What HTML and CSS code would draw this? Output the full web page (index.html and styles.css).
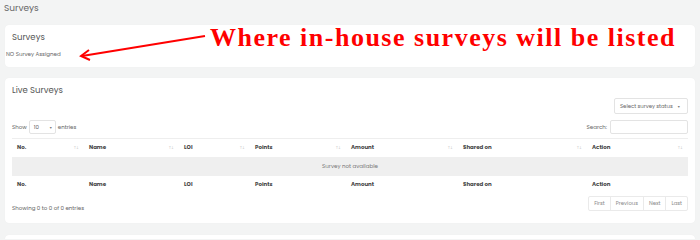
FILE: index.html
```html
<!DOCTYPE html>
<html>
<head>
<meta charset="utf-8">
<link rel="stylesheet" href="styles.css">
</head>
<body>
<div class="page">
  <div class="page-title">Surveys</div>
  <div class="card card-top">
    <div class="card-title">Surveys</div>
    <div class="empty-note">NO Survey Assigned</div>
  </div>
  <div class="card card-live">
    <div class="card-title">Live Surveys</div>
    <div class="filter-row">
      <div class="status-select">Select survey status <span class="caret">&#9662;</span></div>
    </div>
    <div class="controls">
      <div class="length">Show <span class="len-select">10 <span class="caret">&#9662;</span></span> entries</div>
      <div class="search">Search: <span class="search-input"></span></div>
    </div>
    <table class="grid">
      <colgroup>
        <col style="width:72px"><col style="width:95px"><col style="width:71px"><col style="width:96px"><col style="width:112px"><col style="width:129px"><col style="width:101px">
      </colgroup>
      <thead>
        <tr>
          <th>No.<span class="sort">&#8593;&#8595;</span></th>
          <th>Name<span class="sort">&#8593;&#8595;</span></th>
          <th>LOI<span class="sort">&#8593;&#8595;</span></th>
          <th>Points<span class="sort">&#8593;&#8595;</span></th>
          <th>Amount<span class="sort">&#8593;&#8595;</span></th>
          <th>Shared on<span class="sort">&#8593;&#8595;</span></th>
          <th>Action<span class="sort">&#8593;&#8595;</span></th>
        </tr>
      </thead>
      <tbody>
        <tr class="empty-row"><td colspan="7">Survey not available</td></tr>
      </tbody>
      <tfoot>
        <tr>
          <th>No.</th><th>Name</th><th>LOI</th><th>Points</th><th>Amount</th><th>Shared on</th><th>Action</th>
        </tr>
      </tfoot>
    </table>
    <div class="bottom">
      <div class="info">Showing 0 to 0 of 0 entries</div>
      <div class="pager">
        <span class="pg">First</span><span class="pg">Previous</span><span class="pg">Next</span><span class="pg">Last</span>
      </div>
    </div>
  </div>
  <div class="card card-next"></div>

  <svg class="arrow" width="140" height="40" viewBox="0 0 140 40">
    <line x1="4" y1="32" x2="127" y2="12" stroke="#f00" stroke-width="2"/>
    <path d="M11 26 L3 32 L12 36" fill="none" stroke="#f00" stroke-width="2"/>
  </svg>
  <div class="annotation">Where in-house surveys will be listed</div>
</div>
</body>
</html>
```

FILE: styles.css
```css
* { box-sizing: border-box; }
html, body { margin: 0; padding: 0; }
body {
  background: #f3f4f4;
  font-family: "Poppins", "DejaVu Sans", sans-serif;
  color: #555;
  width: 700px;
  height: 239px;
  overflow: hidden;
}
.page { position: relative; padding: 3px 5px 0 5px; height: 239px; overflow: hidden; }
.page-title {
  font-size: 9px;
  color: #666;
  height: 22px;
  margin-left: -1px;
  line-height: 10px;
}
.card {
  background: #fff;
  border-radius: 4px;
  box-shadow: 0 0 1px rgba(0,0,0,0.06);
}
.card-top { height: 42px; padding: 7px 6px 0 1px; }
.card-top .card-title { padding-left: 6px; }
.card-title { font-size: 8.5px; color: #555; line-height: 10px; }
.empty-note { font-size: 5.5px; color: #666; margin-top: 8px; }
.card-live { margin-top: 11px; height: 145px; padding: 7px 7px 0 7px; }
.filter-row { display: flex; justify-content: flex-end; margin-top: 3px; }
.status-select {
  width: 74px; height: 16px;
  border: 1px solid #e3e3e3; border-radius: 2px;
  font-size: 5.3px; color: #666;
  display: flex; align-items: center; padding-left: 5px; gap: 5px;
}
.caret { font-size: 4px; color: #777; }
.controls { display: flex; justify-content: space-between; align-items: center; margin-top: 6px; height: 14px; }
.length { font-size: 5.5px; color: #666; display: flex; align-items: center; gap: 2px; }
.len-select {
  width: 27px; height: 14px; border: 1px solid #e3e3e3; border-radius: 2px;
  display: inline-flex; align-items: center; justify-content: space-between; padding: 0 3px 0 4px; font-size: 5.5px;
}
.search { font-size: 5.5px; color: #666; display: flex; align-items: center; gap: 3px; }
.search-input { width: 78px; height: 14px; border: 1px solid #e3e3e3; border-radius: 2px; display: inline-block; }
.grid {
  width: 676px; border-collapse: collapse; table-layout: fixed; margin-top: 4px;
  font-size: 5.5px;
}
.grid th { font-weight: bold; color: #444; text-align: left; padding: 0 5px; height: 18px; position: relative; }
.grid thead th { border-top: 1px solid #eee; }
.sort { position: absolute; right: 6px; top: 6px; font-size: 4px; color: #ccc; letter-spacing: -1px; font-weight: normal; }
.empty-row td { background: #efefef; text-align: center; color: #777; height: 19px; font-size: 5.5px; }
.bottom { display: flex; justify-content: space-between; align-items: flex-start; margin-top: 2px; }
.info { font-size: 5.5px; color: #666; margin-top: 8px; }
.pager { display: flex; border: 1px solid #eaeaea; border-radius: 2px; height: 15px; }
.pg { font-size: 5.3px; color: #888; padding: 0 5px; display: flex; align-items: center; border-left: 1px solid #eaeaea; }
.pg:first-child { border-left: none; }
.card-next { margin-top: 12px; height: 20px; }
.arrow { position: absolute; left: 78px; top: 24px; }
.annotation {
  position: absolute; left: 210px; top: 23px;
  font-family: "Liberation Serif", serif; font-weight: bold;
  color: #f00; font-size: 26px; letter-spacing: 1.5px; white-space: nowrap;
}
```
